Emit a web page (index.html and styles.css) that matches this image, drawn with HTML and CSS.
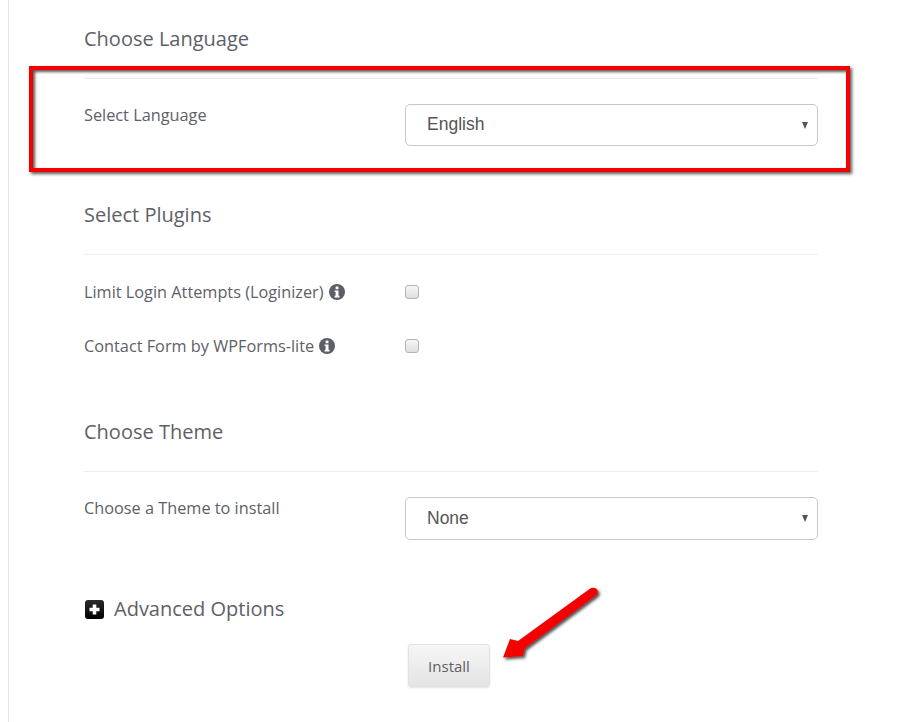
FILE: index.html
```html
<!DOCTYPE html>
<html lang="en">
<head>
<meta charset="utf-8">
<title>Install</title>
<link rel="stylesheet" href="styles.css">
</head>
<body>
<main class="page">
  <section class="section first">
    <h2 class="heading">Choose Language</h2>
    <div class="field">
      <label class="label">Select Language</label>
      <div class="select"><span class="value">English</span><i class="caret"></i></div>
    </div>
  </section>
  <section class="section plugins">
    <h2 class="heading">Select Plugins</h2>
    <div class="check-row">
      <div class="check-label">Limit Login Attempts (Loginizer)
        <svg class="info" viewBox="0 0 16 16"><circle cx="8" cy="8" r="8" fill="#5b5f66"/><rect x="6.6" y="2.6" width="2.9" height="2.6" rx=".5" fill="#fff"/><path d="M5.6 6.4h3.9v5.3h1v1.7H5.6v-1.7h1V8.1h-1z" fill="#fff"/></svg>
      </div>
      <span class="checkbox"></span>
    </div>
    <div class="check-row">
      <div class="check-label">Contact Form by WPForms-lite
        <svg class="info" viewBox="0 0 16 16"><circle cx="8" cy="8" r="8" fill="#5b5f66"/><rect x="6.6" y="2.6" width="2.9" height="2.6" rx=".5" fill="#fff"/><path d="M5.6 6.4h3.9v5.3h1v1.7H5.6v-1.7h1V8.1h-1z" fill="#fff"/></svg>
      </div>
      <span class="checkbox"></span>
    </div>
  </section>
  <section class="section theme">
    <h2 class="heading">Choose Theme</h2>
    <div class="field">
      <label class="label">Choose a Theme to install</label>
      <div class="select tall"><span class="value">None</span><i class="caret"></i></div>
    </div>
  </section>
  <div class="advanced">
    <svg class="plus" viewBox="0 0 19 19"><defs><linearGradient id="pg" x1="0" y1="0" x2="0" y2="1"><stop offset="0" stop-color="#2a2a2a"/><stop offset="1" stop-color="#000"/></linearGradient></defs><rect width="19" height="19" rx="3" fill="url(#pg)"/><path d="M7.700 4.500h3.600v3.200h3.200v3.600h-3.200v3.200H7.700v-3.200H4.500V7.700h3.200z" fill="#fff"/></svg>
    <span>Advanced Options</span>
  </div>
  <div class="actions"><button class="install" type="button">Install</button></div>
</main>

<div class="highlight"></div>
<svg class="arrow" viewBox="0 0 110 80" width="110" height="80">
  <defs><filter id="sh" x="-20%" y="-20%" width="150%" height="150%"><feDropShadow dx="2" dy="2" stdDeviation="1.500" flood-color="#000" flood-opacity=".7"/></filter></defs>
  <path d="M89.500 3 C92.500 .8 96 1.500 97.300 4 C98.500 6.500 97.500 8.300 95.500 9.800 L24.500 62.500 L23 70 L3 71.500 L10 53 L18 55 Z" fill="#f50000" filter="url(#sh)"/>
</svg>
</body>
</html>
```
FILE: styles.css
```css
* { box-sizing: border-box; }
html, body { margin: 0; padding: 0; background: #fff; }
body {
  height: 722px;
  overflow: hidden;
  position: relative;
  font-family: "Open Sans", sans-serif;
  color: #5d6167;
}
.page {
  margin-left: 8px;
  width: 810px;
  height: 722px;
  border-left: 1px solid #e6e6e6;
  padding-left: 75px;
}
.section { display: block; }
.first { padding-top: 25px; }
.plugins { padding-top: 55px; }
.theme { padding-top: 57px; }
.heading {
  margin: 0;
  font-size: 20px;
  line-height: 28px;
  font-weight: 400;
  color: #5d6167;
  padding-bottom: 25px;
  border-bottom: 1px solid #eeeeee;
}
.field {
  display: flex;
  padding-top: 25px;
}
.label, .check-label {
  font-size: 16.3px;
  line-height: 22px;
  width: 321px;
  flex: none;
}
.select {
  flex: 1;
  height: 42px;
  border: 1px solid #c8c8c8;
  border-radius: 5px;
  padding: 0 9px 0 21px;
  display: flex;
  align-items: center;
  justify-content: space-between;
  font-family: "Liberation Sans", Arial, sans-serif;
  font-size: 17.5px;
  color: #555;
}
.value { margin-top: -2px; }
.select.tall { height: 43px; }
.tall .value { margin-top: 0; }
.caret {
  width: 0;
  height: 0;
  border-left: 3.500px solid transparent;
  border-right: 3.500px solid transparent;
  border-top: 7px solid #555;
}
.check-row {
  display: flex;
  align-items: center;
  height: 30px;
  margin-top: 24px;
}
.section .heading + .check-row { margin-top: 22px; }
.check-label { display: flex; align-items: center; gap: 5px; }
.info { width: 16px; height: 16px; flex: none; }
.checkbox {
  width: 14px;
  height: 14px;
  border: 1px solid #b5b5b5;
  border-radius: 3px;
  background: linear-gradient(#f6f6f6, #dedede);
}
.advanced {
  display: flex;
  align-items: center;
  gap: 10px;
  margin-top: 55px;
  padding-left: 1px;
  height: 28px;
  font-size: 20px;
  line-height: 28px;
}
.plus { width: 19px; height: 19px; flex: none; }
.actions { display: flex; padding: 21px 0 0 324px; }
.install {
  width: 82px;
  height: 43px;
  border: 1px solid #e2e2e2;
  border-radius: 3px;
  background: linear-gradient(#f6f6f6, #e4e4e4);
  box-shadow: 0 1px 2px rgba(0,0,0,.12);
  font-family: "Open Sans", sans-serif;
  font-size: 15px;
  color: #5d6167;
  padding: 0;
}
.highlight {
  position: absolute;
  left: 29px;
  top: 66px;
  width: 820.5px;
  height: 106px;
  border: 4.500px solid #f70000;
  box-shadow: 2px 2px 3px rgba(0,0,0,.65), inset 2px 2px 3px rgba(0,0,0,.65);
}
.arrow {
  position: absolute;
  left: 500px;
  top: 586px;
}
```
